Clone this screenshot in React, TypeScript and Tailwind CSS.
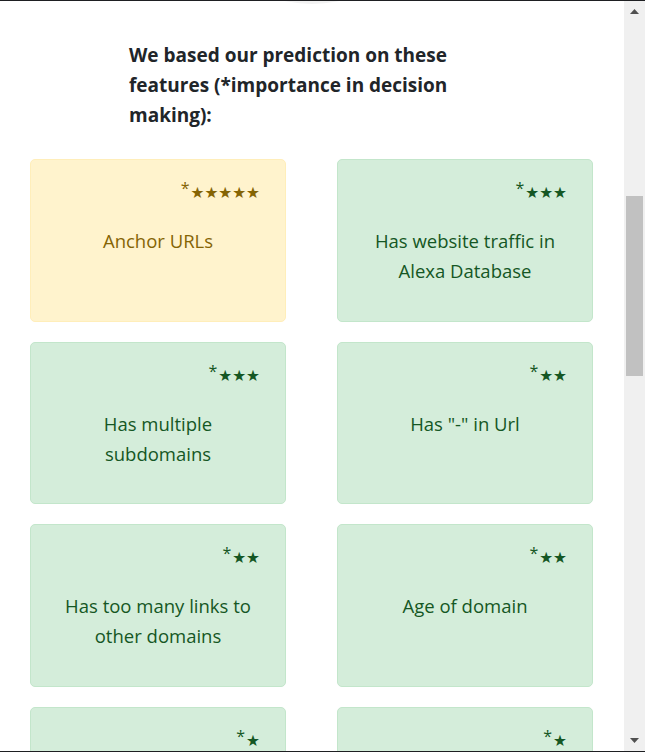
import { Fragment } from 'react';

interface Feature {
    name: string;
    stars: number;
    tone: 'warning' | 'success';
}

const features: Feature[] = [
    { name: "Anchor URLs", stars: 5, tone: "warning" },
    { name: "Has website traffic in Alexa Database", stars: 3, tone: "success" },
    { name: "Has multiple subdomains", stars: 3, tone: "success" },
    { name: "Has \"-\" in Url", stars: 2, tone: "success" },
    { name: "Has too many links to other domains", stars: 2, tone: "success" },
    { name: "Age of domain", stars: 2, tone: "success" },
    { name: "Has IP address", stars: 1, tone: "success" },
    { name: "Uses HTTPS", stars: 1, tone: "success" },
];

const FeatureCard = ({ feature }: { feature: Feature }) => {
    const toneClass = feature.tone === 'warning'
        ? "bg-[#fff3cd] border-[#ffeeba] text-[#856404]"
        : "bg-[#d4edda] border-[#c3e6cb] text-[#155724]";

    return (
        <div className={`h-[162.7px] rounded-[5px] border px-[25px] pt-[19px] ${toneClass}`}>
            <div className="h-[26px] text-right leading-[26px]">
                <span className="mr-[1px] align-top text-[16px] leading-[18px]">*</span>
                <span className="font-['DejaVu_Sans',sans-serif] text-[15.5px]">
                    {"★".repeat(feature.stars)}
                </span>
            </div>
            <div className="mt-[21px] text-center text-[18.5px] leading-[30px]">
                {feature.name}
            </div>
        </div>
    );
};

const ScrollArrow = ({ up }: { up: boolean }) => (
    <div className="flex h-[21px] items-center justify-center">
        <svg width="9" height="5" viewBox="0 0 9 5">
            <polygon points={up ? "4.5,0 9,5 0,5" : "0,0 9,0 4.5,5"} fill="#505050" />
        </svg>
    </div>
);

const App = () => {
    return (
        <div className="flex h-screen w-full overflow-hidden border-y border-[#1e1f22] bg-white font-['Open_Sans',sans-serif]">
            <div className="flex-1 overflow-hidden">
                <div className="mx-auto -mt-[249px] h-[252px] w-[252px] rounded-full bg-[#f2f2f2]"></div>

                <h2 className="ml-[129px] mt-[36px] w-[345px] text-[19px] font-bold leading-[30px] text-[#212529]">
                    We based our prediction on these features (*importance in decision making):
                </h2>

                <div className="mt-[29px] grid grid-cols-2 gap-x-[51px] gap-y-5 pl-[30px] pr-[31px]">
                    {features.map((feature, index) => (
                        <Fragment key={index}>
                            <FeatureCard feature={feature} />
                        </Fragment>
                    ))}
                </div>
            </div>

            <div className="flex w-[21px] flex-col bg-[#f0f0f0]">
                <ScrollArrow up={true} />
                <div className="flex-1">
                    <div className="ml-[2px] mt-[174px] h-[180px] w-[17px] bg-[#c1c1c1]"></div>
                </div>
                <ScrollArrow up={false} />
            </div>
        </div>
    );
};

export default App;
